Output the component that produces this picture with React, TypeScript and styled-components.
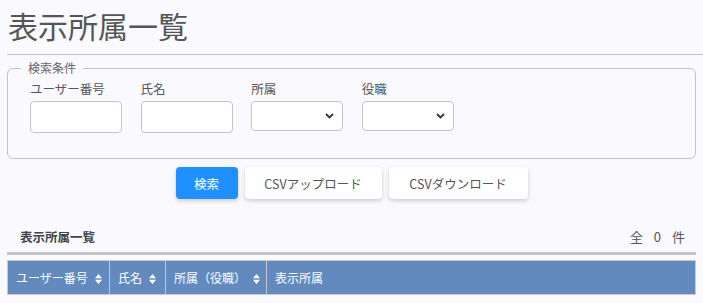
import styled, { createGlobalStyle } from "styled-components";

const GlobalStyle = createGlobalStyle`
  html, body {
    margin: 0;
    padding: 0;
    background: #f9f9fe;
  }
  body {
    font-family: "Noto Sans CJK JP", "Noto Sans", sans-serif;
    color: #555;
  }
`;

const Page = styled.div`
  padding: 0 7px;
`;

const Title = styled.h1`
  margin: 5px 0 0 1px;
  font-size: 30px;
  line-height: 40px;
  font-weight: 400;
  color: #555;
`;

const Divider = styled.hr`
  margin: 9px -7px 0 0;
  border: none;
  border-top: 1px solid #c4c4c8;
`;

const Conditions = styled.fieldset`
  margin: 6px 0 0;
  padding: 4px 22px 25px;
  border: 1px solid #c4c4c8;
  border-radius: 6px;
`;

const Legend = styled.legend`
  margin-left: -9px;
  padding: 0 7px;
  font-size: 12px;
  line-height: 14px;
  color: #666;
`;

const FieldRow = styled.div`
  display: flex;
  gap: 18.6px;
`;

const Field = styled.div`
  display: flex;
  flex-direction: column;
  width: 92px;
`;

const Label = styled.label`
  font-size: 12.5px;
  line-height: 20px;
  margin-bottom: 2px;
  color: #555;
`;

const TextInput = styled.input`
  box-sizing: border-box;
  width: 92px;
  height: 32px;
  border: 1px solid #c4c4c8;
  border-radius: 4px;
  background: #fff;
`;

const SelectBox = styled.div`
  box-sizing: border-box;
  width: 92px;
  height: 30px;
  border: 1px solid #c4c4c8;
  border-radius: 4px;
  background: #fff;
  display: flex;
  align-items: center;
  justify-content: flex-end;
  padding-right: 8px;
`;

const ButtonRow = styled.div`
  display: flex;
  justify-content: center;
  gap: 7px;
  margin-top: 8px;
`;

const Button = styled.button<{ $primary?: boolean; $w: number }>`
  width: ${(p) => p.$w}px;
  height: 32px;
  border: none;
  border-radius: 4px;
  font-family: "Noto Sans CJK JP", "Noto Sans", sans-serif;
  font-size: 12.5px;
  color: ${(p) => (p.$primary ? "#fff" : "#555")};
  background: ${(p) => (p.$primary ? "#1e90ff" : "#fff")};
  box-shadow: 0 2px 4px rgba(0, 0, 0, 0.18);
`;

const ListHead = styled.div`
  display: flex;
  justify-content: space-between;
  align-items: center;
  margin-top: 22px;
  padding: 0 11px 0 13px;
  height: 31px;
  border-bottom: 3px solid #c4c4cc;
`;

const ListTitle = styled.div`
  font-size: 12.5px;
  font-weight: 700;
  color: #444;
`;

const Count = styled.div`
  font-size: 13px;
  color: #555;
  word-spacing: 8px;
`;

const Table = styled.table`
  width: 100%;
  margin-top: 5px;
  border-collapse: collapse;
  table-layout: fixed;
`;

const Th = styled.th<{ $w?: number }>`
  ${(p) => (p.$w ? `width: ${p.$w}px;` : "")}
  height: 34px;
  padding: 0 7px 0 8px;
  box-sizing: border-box;
  background: #628abf;
  border: 1px solid #c8c8d0;
  color: #fff;
  font-size: 12px;
  font-weight: 400;
  text-align: left;
  white-space: nowrap;
`;

const SortIcon = () => (
  <svg
    width="7"
    height="10"
    viewBox="0 0 7 10"
    style={{ marginLeft: 7, verticalAlign: "-1px" }}
  >
    <path d="M3.5 0 L7 4.2 H0 Z M3.5 10 L0 5.8 H7 Z" fill="#fff" />
  </svg>
);

const Chevron = () => (
  <svg width="9" height="6" viewBox="0 0 9 6">
    <path
      d="M1 1 L4.5 4.5 L8 1"
      fill="none"
      stroke="#333"
      strokeWidth="1.8"
    />
  </svg>
);

export default function App() {
  return (
    <>
      <GlobalStyle />
      <Page>
        <Title>表示所属一覧</Title>
        <Divider />
        <Conditions>
          <Legend>検索条件</Legend>
          <FieldRow>
            <Field>
              <Label>ユーザー番号</Label>
              <TextInput />
            </Field>
            <Field>
              <Label>氏名</Label>
              <TextInput />
            </Field>
            <Field>
              <Label>所属</Label>
              <SelectBox>
                <Chevron />
              </SelectBox>
            </Field>
            <Field>
              <Label>役職</Label>
              <SelectBox>
                <Chevron />
              </SelectBox>
            </Field>
          </FieldRow>
        </Conditions>
        <ButtonRow>
          <Button $primary $w={62}>
            検索
          </Button>
          <Button $w={137}>CSVアップロード</Button>
          <Button $w={139}>CSVダウンロード</Button>
        </ButtonRow>
        <ListHead>
          <ListTitle>表示所属一覧</ListTitle>
          <Count>全 0 件</Count>
        </ListHead>
        <Table>
          <thead>
            <tr>
              <Th $w={102}>
                ユーザー番号
                <SortIcon />
              </Th>
              <Th $w={56}>
                氏名
                <SortIcon />
              </Th>
              <Th $w={101}>
                所属（役職）
                <SortIcon />
              </Th>
              <Th>表示所属</Th>
            </tr>
          </thead>
        </Table>
      </Page>
    </>
  );
}
